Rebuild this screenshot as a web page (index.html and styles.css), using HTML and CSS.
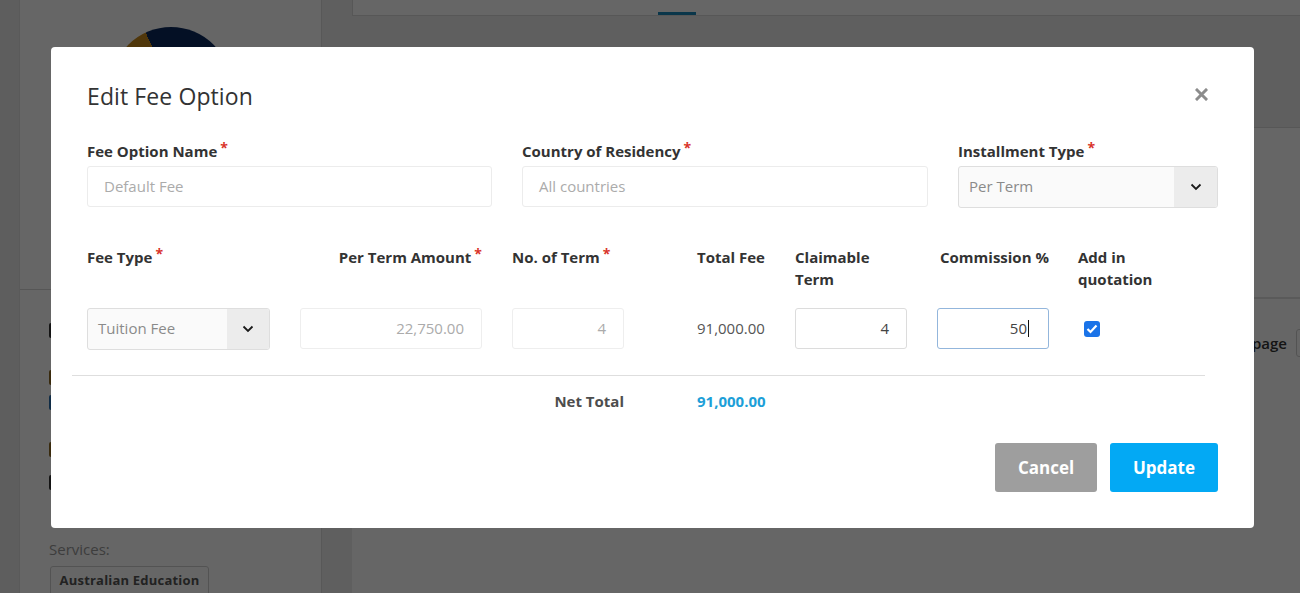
FILE: index.html
```html
<!DOCTYPE html>
<html>
<head>
<meta charset="utf-8">
<title>Edit Fee Option</title>
<link rel="stylesheet" href="styles.css">
</head>
<body>
<div class="page">
  <div class="strip"></div>
  <aside class="sidebar">
    <div class="profile">
      <div class="avatar"></div>
    </div>
    <div class="side-info">
      <span class="mark dark m-first"></span>
      <span class="mark orange m-gap"></span>
      <span class="mark blue"></span>
      <span class="mark orange m-gap"></span>
      <span class="mark dark m-small"></span>
    </div>
    <div class="services">
      <div class="services-title">Services:</div>
      <span class="tag">Australian Education</span>
    </div>
  </aside>
  <main class="main">
    <div class="topcard"><span class="tab"></span></div>
    <div class="card">
      <div class="card-body"></div>
      <div class="card-foot">
        <span class="pager-text">Go to page</span>
        <span class="pager-box"></span>
      </div>
    </div>
  </main>
</div>

<div class="overlay">
  <div class="modal">
    <div class="modal-head">
      <h2 class="modal-title">Edit Fee Option</h2>
      <span class="close">
        <svg width="13" height="13" viewBox="0 0 13 13"><path d="M2 2 L11 11 M11 2 L2 11" stroke="#8c8c8c" stroke-width="3" stroke-linecap="square"/></svg>
      </span>
    </div>

    <div class="fields">
      <div class="field">
        <div class="label">Fee Option Name<span class="req">*</span></div>
        <div class="input ph pad-l16">Default Fee</div>
      </div>
      <div class="field">
        <div class="label">Country of Residency<span class="req">*</span></div>
        <div class="input ph pad-l16">All countries</div>
      </div>
      <div class="field">
        <div class="label">Installment Type<span class="req">*</span></div>
        <div class="select">
          <div class="select-value">Per Term</div>
          <div class="select-btn">
            <svg width="12" height="8" viewBox="0 0 12 8"><path d="M1.5 1.5 L6 6 L10.5 1.5" fill="none" stroke="#1a1a1a" stroke-width="1.8"/></svg>
          </div>
        </div>
      </div>
    </div>

    <div class="fee-table">
      <div class="fee-grid">
        <div class="th">Fee Type<span class="req">*</span></div>
        <div class="th th-right">Per Term Amount<span class="req">*</span></div>
        <div class="th">No. of Term<span class="req">*</span></div>
        <div class="th">Total Fee</div>
        <div class="th">Claimable<br>Term</div>
        <div class="th th-comm">Commission %</div>
        <div class="th">Add in<br>quotation</div>

        <div class="select w183">
          <div class="select-value">Tuition Fee</div>
          <div class="select-btn b42">
            <svg width="12" height="8" viewBox="0 0 12 8"><path d="M1.5 1.5 L6 6 L10.5 1.5" fill="none" stroke="#1a1a1a" stroke-width="1.8"/></svg>
          </div>
        </div>
        <div class="input num disabled w182">22,750.00</div>
        <div class="input num disabled w112">4</div>
        <div class="cell-text">91,000.00</div>
        <div class="input num active w112">4</div>
        <div class="input num focus w112">50<span class="caret"></span></div>
        <div class="cell-check">
          <span class="checkbox">
            <svg width="12" height="10" viewBox="0 0 12 10"><path d="M1.5 5 L4.5 8 L10.5 1.5" fill="none" stroke="#fff" stroke-width="2.2"/></svg>
          </span>
        </div>
      </div>
      <div class="fee-hr"></div>
      <div class="total-grid">
        <div></div>
        <div></div>
        <div class="net-label">Net Total</div>
        <div class="net-value">91,000.00</div>
      </div>
    </div>

    <div class="modal-foot">
      <button class="btn btn-cancel">Cancel</button>
      <button class="btn btn-update">Update</button>
    </div>
  </div>
</div>
</body>
</html>
```

FILE: styles.css
```css
* { box-sizing: border-box; }
html, body { margin: 0; padding: 0; }
body {
  width: 1300px;
  height: 593px;
  overflow: hidden;
  font-family: "Open Sans", "Liberation Sans", sans-serif;
  background: #eeeeee;
  color: #333;
}

/* ---------- background page ---------- */
.page { display: flex; height: 593px; }
.strip { width: 20px; background: #ebebeb; border-right: 1px solid #e2e2e2; }
.sidebar {
  width: 302px;
  background: #fff;
  border-right: 1px solid #dcdcdc;
  display: flex;
  flex-direction: column;
  overflow: hidden;
}
.sidebar > * { flex-shrink: 0; }
.profile {
  height: 290px;
  padding-top: 27px;
  border-bottom: 1px solid #d8d8d8;
  display: flex;
  justify-content: center;
}
.avatar {
  width: 120px;
  height: 120px;
  border-radius: 50%;
  background: conic-gradient(#0b2a5e 0deg 255deg, #c98a1c 255deg 335deg, #0b2a5e 335deg 360deg);
}
.side-info { padding: 0 0 0 29px; display: flex; flex-direction: column; align-items: flex-start; }
.mark { display: block; width: 10px; height: 15px; margin-top: 10px; border-radius: 2px; }
.m-first { margin-top: 33px; }
.m-gap { margin-top: 32px; }
.m-small { margin-top: 18px; }
.orange { background: #8f6a22; }
.blue { background: #2a6fb0; }
.dark { background: #333; }
.services { padding: 48px 0 0 29px; }
.services-title { font-size: 15px; line-height: 22px; color: #999; }
.tag {
  display: inline-block;
  margin-top: 6px;
  margin-left: 1px;
  width: 159px;
  height: 32px;
  border: 1px solid #cfcfcf;
  border-radius: 3px;
  font-size: 13px;
  font-weight: 700;
  line-height: 26px;
  text-align: center;
  color: #555;
  letter-spacing: 0.2px;
}
.main { flex: 1; padding-left: 30px; overflow: hidden; }
.topcard {
  height: 16px;
  background: #fff;
  border-bottom: 1px solid #dadada;
  border-left: 1px solid #dadada;
  display: flex;
}
.tab { margin-left: 305px; width: 38px; height: 15px; border-bottom: 3px solid #1a88b8; }
.card { margin-top: 111px; background: #fff; border-top: 1px solid #dadada; height: 480px; }
.card-body { height: 171px; border-bottom: 2px solid #e0e0e0; }
.card-foot {
  display: flex;
  justify-content: flex-end;
  align-items: center;
  gap: 9px;
  padding-top: 30px;
  margin-right: -36px;
}
.pager-text { font-size: 15px; font-weight: 600; color: #333; line-height: 28px; }
.pager-box { width: 40px; height: 28px; border: 1px solid #cfcfcf; border-radius: 3px; }

/* ---------- overlay + modal ---------- */
.overlay {
  position: fixed;
  inset: 0;
  background: rgba(0, 0, 0, 0.6);
  padding: 47px 0 0 51px;
}
.modal {
  width: 1203px;
  background: #fff;
  border-radius: 4px;
  padding: 34px 36px 36px 36px;
}
.modal-head { display: flex; justify-content: space-between; align-items: center; height: 31px; }
.modal-title {
  margin: 0;
  font-size: 23px;
  font-weight: 500;
  line-height: 31px;
  color: #333;
  letter-spacing: 0.1px;
}
.close { display: flex; margin-right: 10px; margin-top: -4px; }

.label, .th {
  font-size: 15px;
  font-weight: 700;
  line-height: 22px;
  color: #333;
}
.req { color: #d9342b; margin-left: 3px; font-size: 14px; vertical-align: 4px; line-height: 0; }

.fields {
  display: grid;
  grid-template-columns: 405px 406px 260px;
  column-gap: 30px;
  margin-top: 28px;
}
.field .label { margin-bottom: 4px; }

.input {
  height: 41px;
  border: 1px solid #ececec;
  border-radius: 3px;
  font-size: 15px;
  line-height: 39px;
  color: #555;
  background: #fff;
  white-space: nowrap;
}
.ph { color: #ababab; }
.pad-l16 { padding-left: 16px; }
.num { text-align: right; padding-right: 17px; }
.disabled { color: #ababab; border-color: #eeeeee; }
.active { border-color: #dcdcdc; color: #444; }
.focus { border-color: #93b6dc; color: #444; padding-right: 19px; }
.caret {
  display: inline-block;
  width: 1px;
  height: 17px;
  background: #111;
  vertical-align: -3px;
  margin-left: 1px;
}

.select {
  height: 42px;
  display: flex;
  border: 1px solid #dedede;
  border-radius: 3px;
  background: #fafafa;
  overflow: hidden;
}
.select-value {
  flex: 1;
  font-size: 15px;
  line-height: 39px;
  padding-left: 10px;
  color: #8a8a8a;
}
.select-btn {
  width: 43px;
  background: #ececec;
  display: flex;
  align-items: center;
  justify-content: center;
}
.b42 { width: 42px; }

.w183 { width: 183px; }
.w182 { width: 182px; }
.w112 { width: 112px; }

.fee-table { margin: 38px 0 0 -15px; width: 1133px; }
.fee-grid, .total-grid {
  display: grid;
  grid-template-columns: 213px 212px 185px 98px 142px 141px 112px;
  padding-left: 15px;
}
.fee-grid { grid-template-rows: 44px 41px; row-gap: 18px; }
.th-right { width: 182px; text-align: right; }
.th-comm { padding-left: 3px; }
.cell-text { font-size: 15px; line-height: 41px; color: #555; }
.cell-check { display: flex; align-items: center; padding-left: 6px; }
.checkbox {
  width: 16px;
  height: 16px;
  border-radius: 3px;
  background: #1a73e8;
  display: flex;
  align-items: center;
  justify-content: center;
}
.fee-hr { margin-top: 26px; border-top: 1px solid #dedede; }
.total-grid { margin-top: 14px; }
.net-label {
  width: 112px;
  text-align: right;
  font-size: 15px;
  font-weight: 700;
  line-height: 22px;
  color: #4d4d4d;
}
.net-value {
  font-size: 15px;
  font-weight: 700;
  line-height: 22px;
  color: #1d9fd8;
}

.modal-foot { display: flex; justify-content: flex-end; gap: 13px; margin-top: 31px; }
.btn {
  height: 49px;
  border: none;
  border-radius: 3px;
  color: #fff;
  font-family: "Open Sans", "Liberation Sans", sans-serif;
  font-size: 17px;
  font-weight: 700;
  padding: 0;
}
.btn-cancel { width: 102px; background: #9e9e9e; }
.btn-update { width: 108px; background: #03a9f4; }
```
